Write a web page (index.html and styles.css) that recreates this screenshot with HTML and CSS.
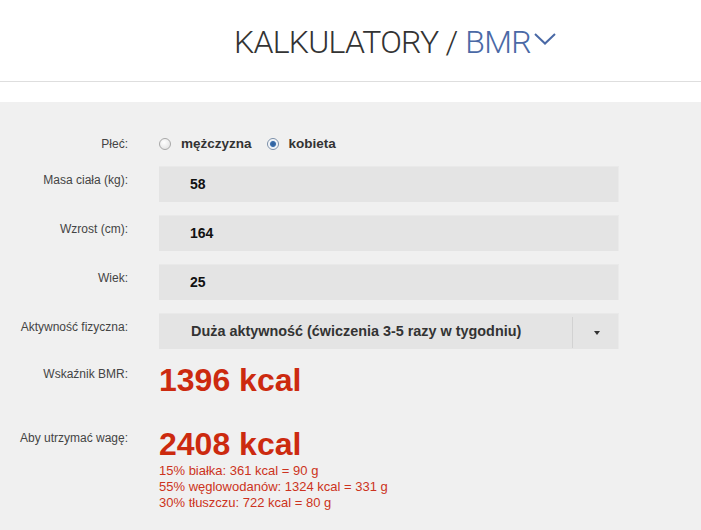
FILE: index.html
```html
<!DOCTYPE html>
<html lang="pl">
<head>
<meta charset="utf-8">
<title>Kalkulator BMR</title>
<link rel="stylesheet" href="styles.css">
</head>
<body>
<header class="top">
  <h1 class="title">KALKULATORY / <span class="accent">BMR</span><svg class="chev" width="22" height="14" viewBox="0 0 22 14"><polyline points="1,2 11,11.5 21,2" fill="none" stroke="#4a69a6" stroke-width="2"/></svg></h1>
</header>
<main class="panel">
  <div class="row row-sex">
    <div class="label">Płeć:</div>
    <div class="field radios">
      <span class="radio"></span><span class="rlabel">mężczyzna</span>
      <span class="radio checked"></span><span class="rlabel">kobieta</span>
    </div>
  </div>
  <div class="row row-input">
    <div class="label">Masa ciała (kg):</div>
    <div class="field input">58</div>
  </div>
  <div class="row row-input">
    <div class="label">Wzrost (cm):</div>
    <div class="field input">164</div>
  </div>
  <div class="row row-input">
    <div class="label">Wiek:</div>
    <div class="field input">25</div>
  </div>
  <div class="row row-input">
    <div class="label">Aktywność fizyczna:</div>
    <div class="field input select">
      <span class="sel-text">Duża aktywność (ćwiczenia 3-5 razy w tygodniu)</span>
      <span class="sel-btn"><span class="tri"></span></span>
    </div>
  </div>
  <div class="row row-result">
    <div class="label">Wskaźnik BMR:</div>
    <div class="field result">
      <div class="big">1396 kcal</div>
    </div>
  </div>
  <div class="row row-result row-keep">
    <div class="label">Aby utrzymać wagę:</div>
    <div class="field result">
      <div class="big">2408 kcal</div>
      <div class="macros">
        <div class="small">15% białka: 361 kcal = 90 g</div>
        <div class="small">55% węglowodanów: 1324 kcal = 331 g</div>
        <div class="small">30% tłuszczu: 722 kcal = 80 g</div>
      </div>
    </div>
  </div>
</main>
</body>
</html>
```
FILE: styles.css
```css
html, body {
  margin: 0;
  padding: 0;
  background: #ffffff;
}
body {
  font-family: "Liberation Sans", Arial, sans-serif;
  color: #444;
}
.top {
  height: 82px;
  border-bottom: 1px solid #dedede;
  margin-bottom: 20px;
  box-sizing: border-box;
}
.title {
  margin: 0;
  padding: 22px 0 0 234px;
  font-family: Roboto, "DejaVu Sans", sans-serif;
  font-weight: 300;
  font-size: 32px;
  line-height: 40px;
  color: #333;
  letter-spacing: -0.75px;
  display: flex;
  align-items: center;
}
.accent {
  color: #4a69a6;
  margin-left: 8px;
}
.chev {
  margin-left: 3px;
  margin-top: -6px;
}
.panel {
  background: #f0f0f0;
  min-height: 428px;
  padding-top: 30px;
  box-sizing: border-box;
}
.row {
  display: flex;
  align-items: flex-start;
}
.label {
  width: 128px;
  margin-right: 31px;
  text-align: right;
  font-size: 12px;
  line-height: 14px;
  color: #444;
  flex: none;
}
.row-sex {
  height: 22px;
  align-items: center;
  margin-bottom: 12px;
}
.row-sex .label {
  padding-top: 2px;
}
.radios {
  display: flex;
  align-items: center;
  font-size: 13.5px;
  font-weight: bold;
  color: #333;
}
.radio {
  width: 10px;
  height: 10px;
  border-radius: 50%;
  border: 1px solid #a8a8a8;
  background: radial-gradient(circle at 40% 35%, #ffffff, #dcdcdc);
  margin-right: 10px;
  margin-top: 1px;
}
.radio.checked {
  border-color: #7a8ea8;
  background: radial-gradient(circle, #2e5f9a 0, #3b6fae 2.5px, #e8eef5 3.5px, #ffffff 5px);
}
.rlabel {
  margin-right: 15px;
}
.row-input {
  margin-bottom: 13px;
}
.row-input .label {
  padding-top: 7px;
}
.input {
  width: 460px;
  height: 36px;
  box-sizing: border-box;
  background: #e4e4e4;
  border-top: 1px solid #e9e9e9;
  border-right: 1px solid #eaeaea;
  padding-left: 31px;
  font-size: 14px;
  font-weight: bold;
  color: #111;
  line-height: 34px;
}
.select {
  display: flex;
  padding-left: 32px;
  color: #333;
  font-size: 14.4px;
}
.sel-text {
  flex: 1;
}
.sel-btn {
  width: 45px;
  border-left: 1px solid #d2d2d2;
  margin: 3px 0 1px;
  display: flex;
  align-items: center;
  justify-content: center;
}
.tri {
  width: 0;
  height: 0;
  border-left: 3px solid transparent;
  border-right: 3px solid transparent;
  border-top: 4px solid #333;
  margin-left: 2px;
}
.row-result {
  margin-top: 12px;
}
.row-result .label {
  padding-top: 5px;
}
.row-keep {
  margin-top: 28px;
}
.result {
  color: #cc2a0f;
}
.big {
  font-size: 32px;
  line-height: 36px;
  font-weight: bold;
  color: #cc2a0f;
}
.macros {
  margin-top: 1px;
}
.small {
  font-size: 13px;
  line-height: 16px;
  color: #cc3320;
}
```
